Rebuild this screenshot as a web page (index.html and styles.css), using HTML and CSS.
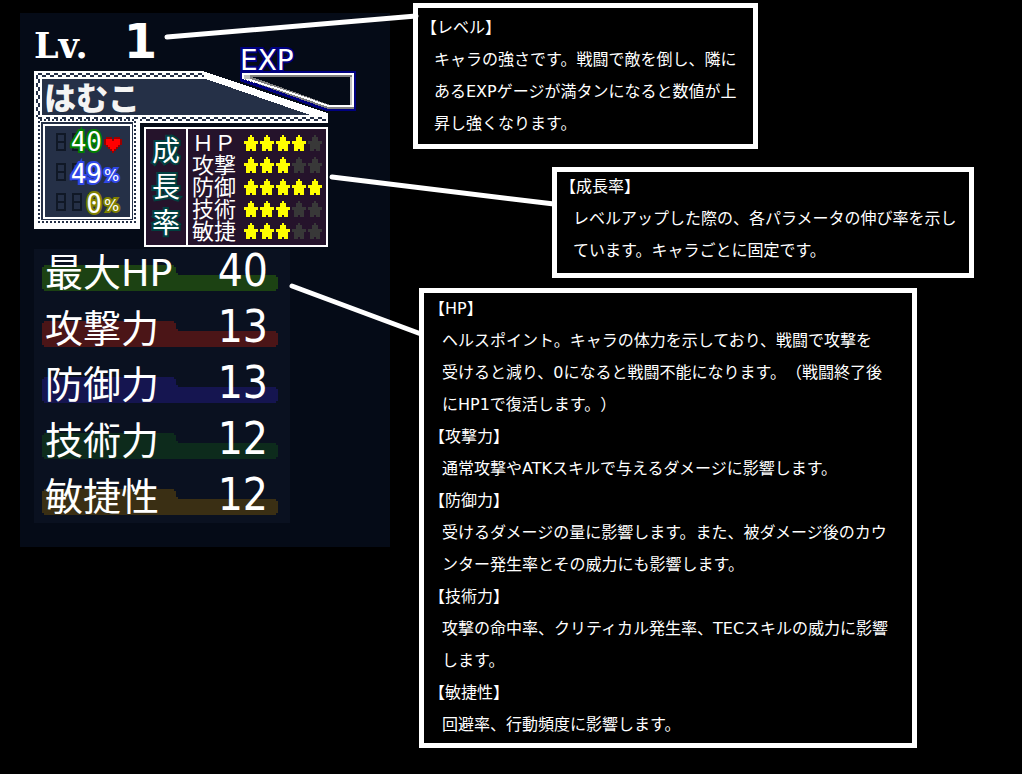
FILE: index.html
```html
<!DOCTYPE html>
<html lang="ja">
<head>
<meta charset="utf-8">
<title>ステータス画面の見方</title>
<link rel="stylesheet" href="styles.css">
</head>
<body>
<svg class="defs" aria-hidden="true">
  <symbol id="star" viewBox="0 0 14 16"><path d="M6 0h2v2h2v4h4v3h-2v7H8v-2H6v2H2V9H0V6h4V2h2z"/></symbol>
  <symbol id="bar" viewBox="0 0 236 26"><path d="M2 0H132V2H134V8H136V10H234V12H236V24H234V26H2V24H0V2H2Z"/></symbol>
  <symbol id="ghost" viewBox="0 0 42 18"><path fill="none" stroke="#101826" stroke-width="2" d="M1 1h8v16h-8zM1 9h8M17 1h8v16h-8zM17 9h8M33 1h8v16h-8zM33 9h8"/></symbol>
</svg>
<main class="guide">
  <section class="panel">
    <header class="level">
      <span class="level-label">Lv.</span>
      <span class="level-value">1</span>
    </header>
    <div class="exp">
      <span class="exp-label">EXP</span>
      <svg class="exp-gauge" viewBox="0 0 116 40" shape-rendering="crispEdges" aria-hidden="true">
        <path fill="#000080" d="M0 0H116V40H86L58 30L0 10Z"/>
        <path fill="#fff" d="M2 2H114V36H88L60 26L2 8Z"/>
        <path fill="#808080" d="M4 4H112V36H114V38H88L60 28L4 8Z"/>
        <path fill="#fff" d="M112 2h2v34h-26v-2h24zM4 6L60 24L88 34V36L60 26L4 8Z"/>
        <path fill="#c0c0c0" d="M110 6h2v28h-2zM4 4h6v4H4z"/>
        <path fill="#050b17" d="M12 6H110V34H90L60 23Z"/>
      </svg>
    </div>
    <div class="status">
      <svg class="frame" viewBox="0 0 294 158" shape-rendering="crispEdges" aria-hidden="true">
        <path fill="#fff" d="M0 0H168L294 42V52H106V158H0Z"/>
        <path fill="#253047" d="M8 8H172L276 44H8Z"/>
        <g fill="none" stroke="#253047" stroke-width="2">
          <path stroke-dasharray="4 4" d="M4 3H170M3 4V46M4 47H292"/>
          <path stroke-dasharray="4 4" stroke-dashoffset="4" d="M4 5H170M5 4V46M4 49H292"/>
        </g>
        <path fill="#fff" d="M0 48H106V158H0Z"/>
        <path fill="none" stroke="#253047" stroke-width="2" stroke-dasharray="2 2" d="M6 49H101V151H5V49"/>
        <path fill="#253047" d="M7 51H99V149H7Z"/>
        <path fill="none" stroke="#fff" stroke-width="2" d="M10 54H97V147H10Z"/>
      </svg>
      <h1 class="name">はむこ</h1>
      <div class="details">
        <div class="gauges">
          <div class="gauge green"><svg class="ghost"><use href="#ghost"/></svg><span class="digits">40</span>
            <svg class="heart" viewBox="0 0 9 8" shape-rendering="crispEdges" role="img" aria-label="HP"><path fill="#900" d="M1 0h3v1h1V0h3v1h1v3H8v1H7v1H6v1H5v1H4V7H3V6H2V5H1V4H0V1h1z"/><path fill="#f00" d="M1 1h3v1h1V1h3v3H7v1H6v1H5v1H4V6H3V5H2V4H1z"/></svg>
          </div>
          <div class="gauge blue"><svg class="ghost"><use href="#ghost"/></svg><span class="digits">49</span><span class="unit">%</span></div>
          <div class="gauge olive"><svg class="ghost"><use href="#ghost"/></svg><span class="digits">0</span><span class="unit">%</span></div>
        </div>
        <div class="growth">
          <h2 class="growth-title">成長率</h2>
          <table class="growth-table">
            <tr><th scope="row">ＨＰ</th><td><span class="stars"><svg><use href="#star"/></svg><svg><use href="#star"/></svg><svg><use href="#star"/></svg><svg><use href="#star"/></svg><svg class="off"><use href="#star"/></svg></span></td></tr>
            <tr><th scope="row">攻撃</th><td><span class="stars"><svg><use href="#star"/></svg><svg><use href="#star"/></svg><svg><use href="#star"/></svg><svg class="off"><use href="#star"/></svg><svg class="off"><use href="#star"/></svg></span></td></tr>
            <tr><th scope="row">防御</th><td><span class="stars"><svg><use href="#star"/></svg><svg><use href="#star"/></svg><svg><use href="#star"/></svg><svg><use href="#star"/></svg><svg><use href="#star"/></svg></span></td></tr>
            <tr><th scope="row">技術</th><td><span class="stars"><svg><use href="#star"/></svg><svg><use href="#star"/></svg><svg><use href="#star"/></svg><svg class="off"><use href="#star"/></svg><svg class="off"><use href="#star"/></svg></span></td></tr>
            <tr><th scope="row">敏捷</th><td><span class="stars"><svg><use href="#star"/></svg><svg><use href="#star"/></svg><svg><use href="#star"/></svg><svg class="off"><use href="#star"/></svg><svg class="off"><use href="#star"/></svg></span></td></tr>
          </table>
        </div>
      </div>
    </div>
    <dl class="stats">
      <div class="stat hp"><svg class="bar"><use href="#bar"/></svg><dt>最大HP</dt><dd>40</dd></div>
      <div class="stat attack"><svg class="bar"><use href="#bar"/></svg><dt>攻撃力</dt><dd>13</dd></div>
      <div class="stat defense"><svg class="bar"><use href="#bar"/></svg><dt>防御力</dt><dd>13</dd></div>
      <div class="stat skill"><svg class="bar"><use href="#bar"/></svg><dt>技術力</dt><dd>12</dd></div>
      <div class="stat speed"><svg class="bar"><use href="#bar"/></svg><dt>敏捷性</dt><dd>12</dd></div>
    </dl>
  </section>

  <div class="notes">
    <section class="note note-level">
      <h2>【レベル】</h2>
      <p>キャラの強さです。戦闘で敵を倒し、隣に<br>あるEXPゲージが満タンになると数値が上<br>昇し強くなります。</p>
    </section>
    <section class="note note-growth">
      <h2>【成長率】</h2>
      <p>レベルアップした際の、各パラメータの伸び率を示し<br>ています。キャラごとに固定です。</p>
    </section>
    <section class="note note-stats">
      <h2>【HP】</h2>
      <p>ヘルスポイント。キャラの体力を示しており、戦闘で攻撃を<br>受けると減り、0になると戦闘不能になります。（戦闘終了後<br>にHP1で復活します。）</p>
      <h2>【攻撃力】</h2>
      <p>通常攻撃やATKスキルで与えるダメージに影響します。</p>
      <h2>【防御力】</h2>
      <p>受けるダメージの量に影響します。また、被ダメージ後のカウ<br>ンター発生率とその威力にも影響します。</p>
      <h2>【技術力】</h2>
      <p>攻撃の命中率、クリティカル発生率、TECスキルの威力に影響<br>します。</p>
      <h2>【敏捷性】</h2>
      <p>回避率、行動頻度に影響します。</p>
    </section>
  </div>

  <svg class="leaders" viewBox="0 0 1022 774" aria-hidden="true">
    <path d="M167 37L416 16M332 177L554 204M292 286L421 334"/>
  </svg>
</main>
</body>
</html>
```

FILE: styles.css
```css
* { box-sizing: border-box; }

body {
  margin: 0;
  background: #000;
  color: #fff;
  font: 16px/32px "DejaVu Sans", "Noto Sans CJK JP", sans-serif;
  text-spacing-trim: space-all;
}

h1, h2, p, dl, dd { margin: 0; }
h1, h2, th { font: inherit; }
svg { display: block; }
.defs { position: absolute; width: 0; height: 0; }

.guide {
  position: relative;
  display: flex;
  align-items: flex-start;
  gap: 23px;
  padding: 3px 20px 24px;
}

.leaders {
  position: absolute;
  top: 0;
  left: 0;
  width: 1022px;
  pointer-events: none;
  fill: none;
  stroke: #fff;
  stroke-width: 5;
  stroke-linecap: round;
}

/* Character panel */
.panel {
  position: relative;
  flex: none;
  width: 370px;
  margin-top: 10px;
  padding: 0 14px 24px;
  background: #050b17;
}

.level {
  display: flex;
  align-items: baseline;
  gap: 36px;
  height: 58px;
  line-height: 56px;
}
.level-label { font-family: "DejaVu Serif", serif; font-weight: bold; font-size: 35px; }
.level-value { font-weight: bold; font-size: 48px; }

.exp {
  position: absolute;
  z-index: 1;
  top: 34px;
  left: 220px;
}
.exp-label {
  display: block;
  font-size: 28px;
  line-height: 28px;
  -webkit-text-stroke: 4px #000080;
  paint-order: stroke fill;
}
.exp-gauge { width: 116px; height: 40px; margin-top: -4px; }

.status { position: relative; }
.frame { position: absolute; top: 0; left: 0; width: 294px; height: 158px; }
.name {
  position: relative;
  height: 56px;
  padding-left: 10px;
  color: #f4f4f4;
  font-family: "Noto Sans CJK JP", sans-serif;
  font-weight: 900;
  font-size: 32px;
  line-height: 50px;
}
.details { position: relative; display: flex; gap: 4px; }

.gauges {
  width: 106px;
  display: flex;
  flex-direction: column;
  gap: 8px;
  padding-top: 4px;
}
.gauge {
  position: relative;
  display: grid;
  grid-template-columns: 48px 20px;
  gap: 2px;
  align-items: center;
  height: 22px;
  padding-left: 20px;
  line-height: 22px;
}
.ghost { position: absolute; top: 2px; left: 22px; width: 42px; height: 18px; }
.digits, .unit {
  position: relative;
  -webkit-text-stroke: 4px currentColor;
  -webkit-text-fill-color: #fff;
  paint-order: stroke fill;
}
.digits { font: 26px/22px "DejaVu Sans Mono", monospace; text-align: right; }
.unit { font-size: 16px; padding-top: 4px; }
.heart { width: 18px; height: 16px; margin-top: 6px; }
.green { color: #008000; }
.blue { color: #3048e8; }
.olive { color: #808000; }

.growth {
  display: flex;
  width: 184px;
  height: 120px;
  border: 2px solid #fff;
  background: #25132b;
  font-family: "Noto Sans CJK JP", sans-serif;
}
.growth-title {
  width: 42px;
  padding: 2px 6px;
  border-right: 2px solid #fff;
  font-size: 28px;
  line-height: 36px;
  word-break: break-all;
  -webkit-text-stroke: 4px #004040;
  paint-order: stroke fill;
}
.growth-table { margin: 3px 0 0 4px; height: 110px; border-collapse: collapse; }
.growth-table th, .growth-table td { height: 22px; padding: 0; }
.growth-table th { width: 52px; font-size: 22px; line-height: 18px; text-align: left; vertical-align: top; white-space: nowrap; }
.stars { display: flex; gap: 2px; fill: #ff0; }
.stars svg { width: 14px; height: 16px; shape-rendering: crispEdges; }
.stars .off { fill: #383838; }

.stats {
  display: flex;
  flex-direction: column;
  gap: 8px;
  width: 256px;
  margin-top: 2px;
  padding: 0 22px 2px 11px;
  background: #0a1120;
}
.stat {
  position: relative;
  display: flex;
  justify-content: space-between;
  align-items: baseline;
  height: 48px;
  line-height: 44px;
}
.bar { position: absolute; top: 16px; left: -3px; width: 236px; height: 26px; }
.stat dt, .stat dd { position: relative; }
.stat dt { font-size: 38px; }
.stat dd { font-family: "DejaVu Sans Condensed", "DejaVu Sans", sans-serif; font-stretch: condensed; font-size: 44px; }
.hp { fill: #1c4213; }
.attack { fill: #4b1517; }
.defense { fill: #151550; }
.skill { fill: #0d2b1c; }
.speed { fill: #3a2f14; }

/* Explanations */
.notes { display: flex; flex-direction: column; align-items: flex-start; min-width: 0; }
.note { border: 5px solid #fff; background: #000; white-space: nowrap; }
.note h2 { line-height: 24px; margin-bottom: 4px; }
.note p { margin-left: 13px; }
.note p + h2 { margin-top: 4px; }
.note-level { padding: 8px 17px 4px 3px; }
.note-growth { margin: 18px 0 0 139px; padding: 3px 12px 6px 3px; }
.note-stats { margin: 10px 0 0 6px; padding: 4px 24px 2px 5px; }
```
